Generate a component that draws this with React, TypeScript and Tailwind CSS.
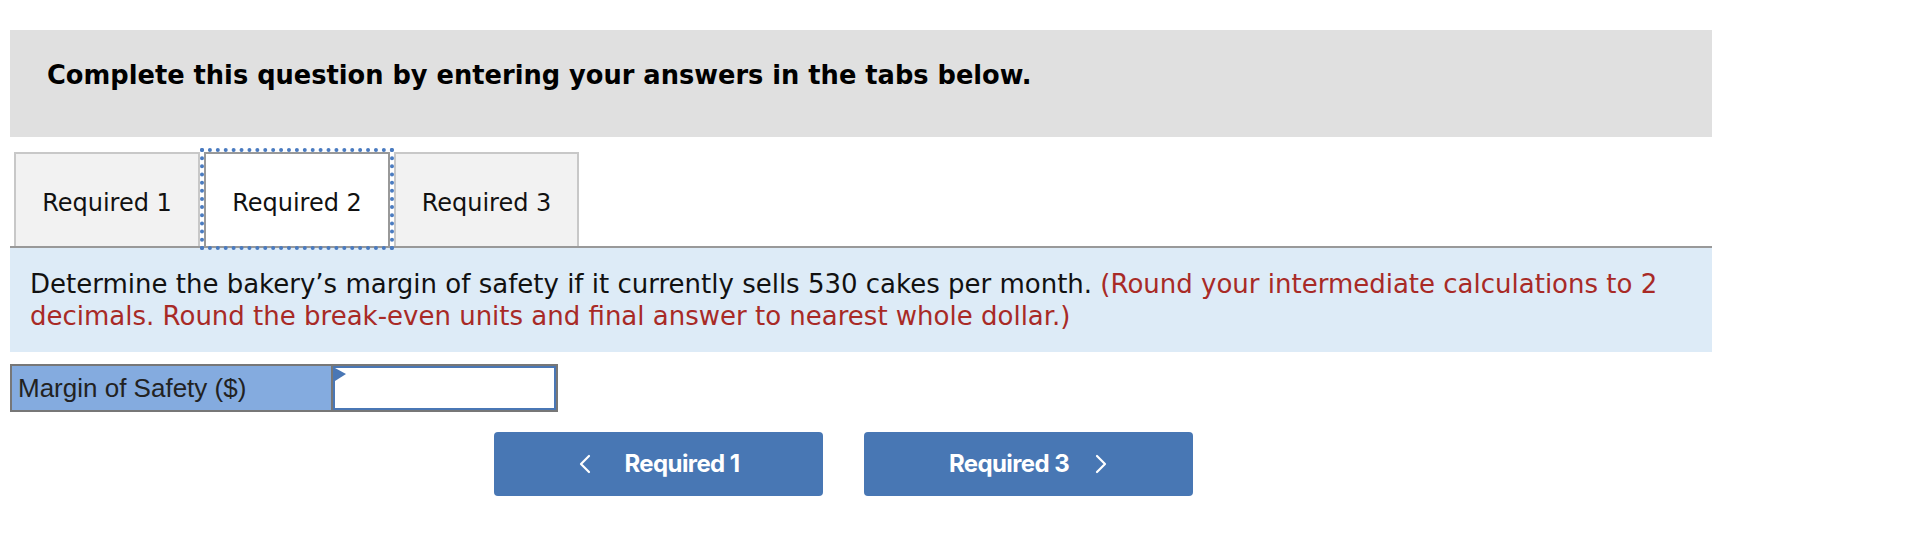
import React from "react"

function ChevronLeftThin() {
  return (
    <svg width="14" height="20" viewBox="0 0 14 20" fill="none">
      <path d="M11 2 L3 10 L11 18" stroke="white" strokeWidth="2.2" strokeLinecap="round" strokeLinejoin="round" />
    </svg>
  )
}

function ChevronRightThin() {
  return (
    <svg width="14" height="20" viewBox="0 0 14 20" fill="none">
      <path d="M3 2 L11 10 L3 18" stroke="white" strokeWidth="2.2" strokeLinecap="round" strokeLinejoin="round" />
    </svg>
  )
}

export default function App() {
  const sans = "font-['DejaVu_Sans',Verdana,sans-serif]"
  return (
    <div className="min-h-screen bg-white pt-[30px]">
      <div className="ml-[10px] w-[1702px]">
        {/* instructions banner */}
        <div className={`h-[107px] bg-[#e0e0e0] pl-[37px] pt-[30px] ${sans}`}>
          <p className="text-[25.7px] leading-[30px] font-bold text-black">
            Complete this question by entering your answers in the tabs below.
          </p>
        </div>

        {/* tabs */}
        <div className={`mt-[15px] flex border-b-2 border-[#999999] pl-[4px] ${sans}`}>
          <button className="flex h-[94px] w-[186px] items-center justify-center border-2 border-b-0 border-[#c8c8c8] bg-[#f2f2f2] pt-[5px] text-[24px] text-[#111]">
            Required 1
          </button>
          <button className="relative z-10 ml-[4px] flex h-[94px] w-[186px] items-center justify-center border-2 border-b-0 border-[#999999] bg-white pt-[5px] text-[24px] text-[#111] outline-4 outline-dotted outline-[#4a7bc0]">
            Required 2
          </button>
          <button className="ml-[4px] flex h-[94px] w-[185px] items-center justify-center border-2 border-b-0 border-[#c8c8c8] bg-[#f2f2f2] pt-[5px] text-[24px] text-[#111]">
            Required 3
          </button>
        </div>

        {/* question */}
        <div className={`bg-[#ddebf7] px-5 py-5 text-[26px] leading-[32px] text-[#111] ${sans}`}>
          Determine the bakery’s margin of safety if it currently sells 530 cakes per month.{" "}
          <span className="text-[#a82a26]">
            (Round your intermediate calculations to 2 decimals. Round the break-even units and final answer to nearest whole dollar.)
          </span>
        </div>

        {/* answer row */}
        <div className="mt-[12px] flex h-[48px] w-[548px] border-2 border-[#777777]">
          <div className="flex w-[319px] items-center bg-[#84abdf] pl-[6px] font-['Liberation_Sans',Arial,sans-serif] text-[26px] text-[#222]">
            Margin of Safety ($)
          </div>
          <div className="flex-1 border-l-2 border-[#777777]">
            <div className="relative h-full border-2 border-[#4a77b5] bg-white">
              <svg className="absolute left-0 top-0" width="12" height="14" viewBox="0 0 12 14">
                <polygon points="0,0 11,6 0,13" fill="#4a77b5" />
              </svg>
            </div>
          </div>
        </div>

        {/* navigation */}
        <div className="mt-[20px] flex gap-[41px] pl-[484px] font-['Inter',sans-serif]">
          <button className="flex h-[64px] w-[329px] items-center justify-center gap-[33px] rounded-[4px] bg-[#4877b4] text-[24px] font-bold tracking-tight text-white">
            <ChevronLeftThin />
            Required 1
          </button>
          <button className="flex h-[64px] w-[329px] items-center justify-center gap-[25px] rounded-[4px] bg-[#4877b4] text-[24px] font-bold tracking-tight text-white">
            Required 3
            <ChevronRightThin />
          </button>
        </div>
      </div>
    </div>
  )
}
